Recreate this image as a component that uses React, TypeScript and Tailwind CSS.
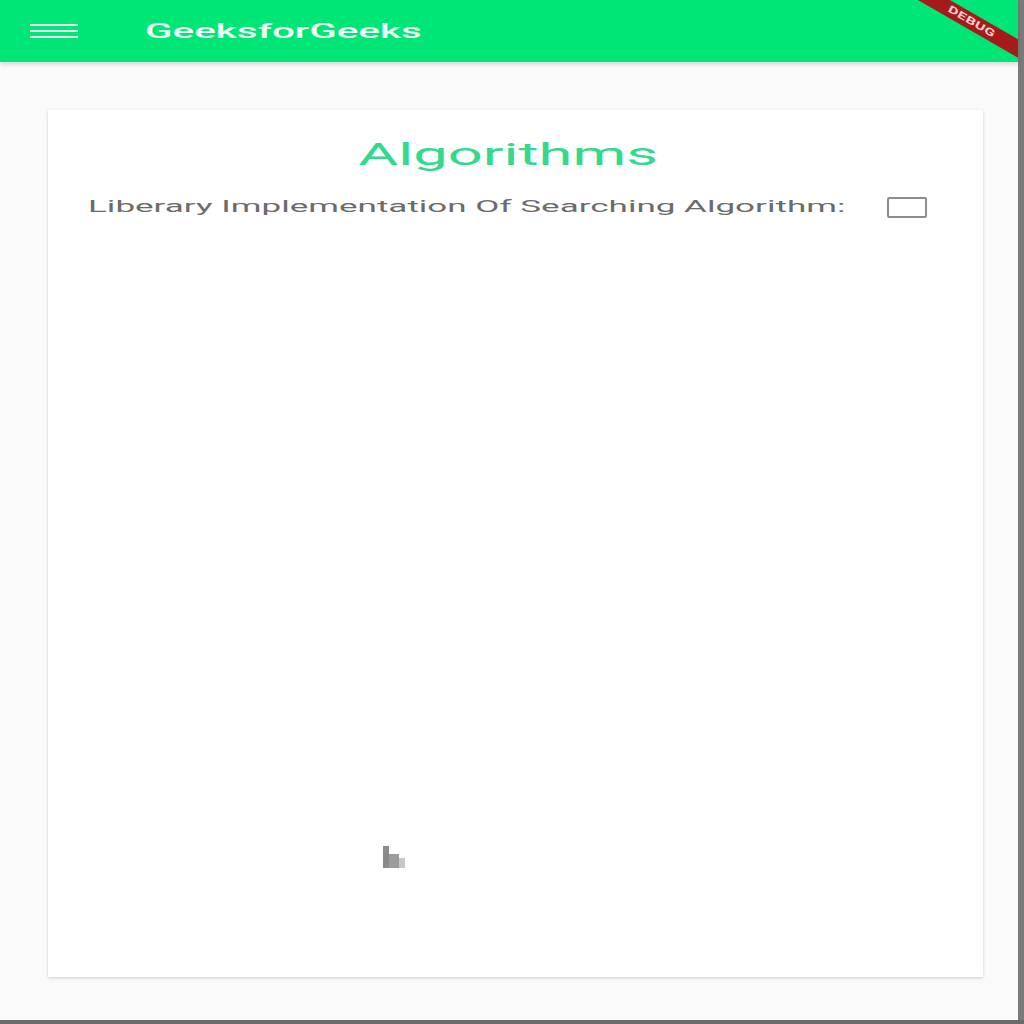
import React from "react";

function Hamburger() {
  return (
    <div className="flex flex-col gap-[4px] w-[48px]">
      <div className="h-[2px] bg-[#e9fff2]" />
      <div className="h-[2px] bg-[#e9fff2]" />
      <div className="h-[2px] bg-[#e9fff2]" />
    </div>
  );
}

function DebugBanner() {
  return (
    <div className="absolute top-0 right-0 w-[110px] h-[64px] overflow-hidden pointer-events-none">
      <div className="absolute top-[14px] right-[-34px] w-[160px] h-[16px] bg-[#a51b1b] rotate-[30deg] flex items-center justify-center">
        <span className="inline-block scale-x-[1.6] text-[10px] font-bold text-[#f3d0d0] tracking-wide leading-none">
          DEBUG
        </span>
      </div>
    </div>
  );
}

function Cursor() {
  return (
    <svg width="24" height="26" viewBox="0 0 24 26">
      <rect x="0" y="0" width="6" height="22" fill="#8a8a8a" />
      <rect x="6" y="8" width="10" height="14" fill="#9c9c9c" />
      <rect x="16" y="12" width="6" height="10" fill="#c8c8c8" />
    </svg>
  );
}

export default function App() {
  return (
    <div className="w-full h-[1024px] bg-[#fafafa] flex flex-col" style={{ fontFamily: "Roboto, 'Noto Sans', sans-serif" }}>
      <div className="flex flex-1 min-h-0">
        <div className="flex-1 flex flex-col">
          <header className="relative h-[62px] bg-[#00e676] flex items-center shadow-[0_3px_4px_rgba(0,0,0,0.12)]">
            <div className="ml-[30px]">
              <Hamburger />
            </div>
            <div className="ml-[67px] w-[275px] pt-[4px]">
              <span className="inline-block origin-left scale-x-[2.02] text-[20px] font-medium text-[#f0fff6] leading-none">
                GeeksforGeeks
              </span>
            </div>
            <DebugBanner />
          </header>
          <main className="flex-1 pl-[48px] pr-[35px] pt-[48px] pb-[43px]">
            <div className="h-full bg-white shadow-[0_1px_3px_rgba(0,0,0,0.18)] flex flex-col">
              <div className="pt-[22px] text-center pr-[14px]">
                <span className="inline-block scale-x-[1.92] text-[32px] text-[#33d98c] leading-[44px]">
                  Algorithms
                </span>
              </div>
              <div className="flex items-center mt-[19px] pl-[40px]">
                <div className="w-[757px]">
                  <span className="inline-block origin-left scale-x-[2.06] text-[17px] text-[#6b6b6b] whitespace-nowrap leading-[22px]">
                    Liberary Implementation Of Searching Algorithm:
                  </span>
                </div>
                <div className="ml-[42px] w-[40px] h-[21px] border-2 border-[#8c8c8c] rounded-[2px] bg-white" />
              </div>
              <div className="flex-1 relative">
                <div className="absolute left-[335px] top-[627px]">
                  <Cursor />
                </div>
              </div>
            </div>
          </main>
        </div>
        <div className="w-[6px] bg-[#7a7a7a]" />
      </div>
      <div className="h-[4px] bg-[#6a6a6a]" />
    </div>
  );
}
